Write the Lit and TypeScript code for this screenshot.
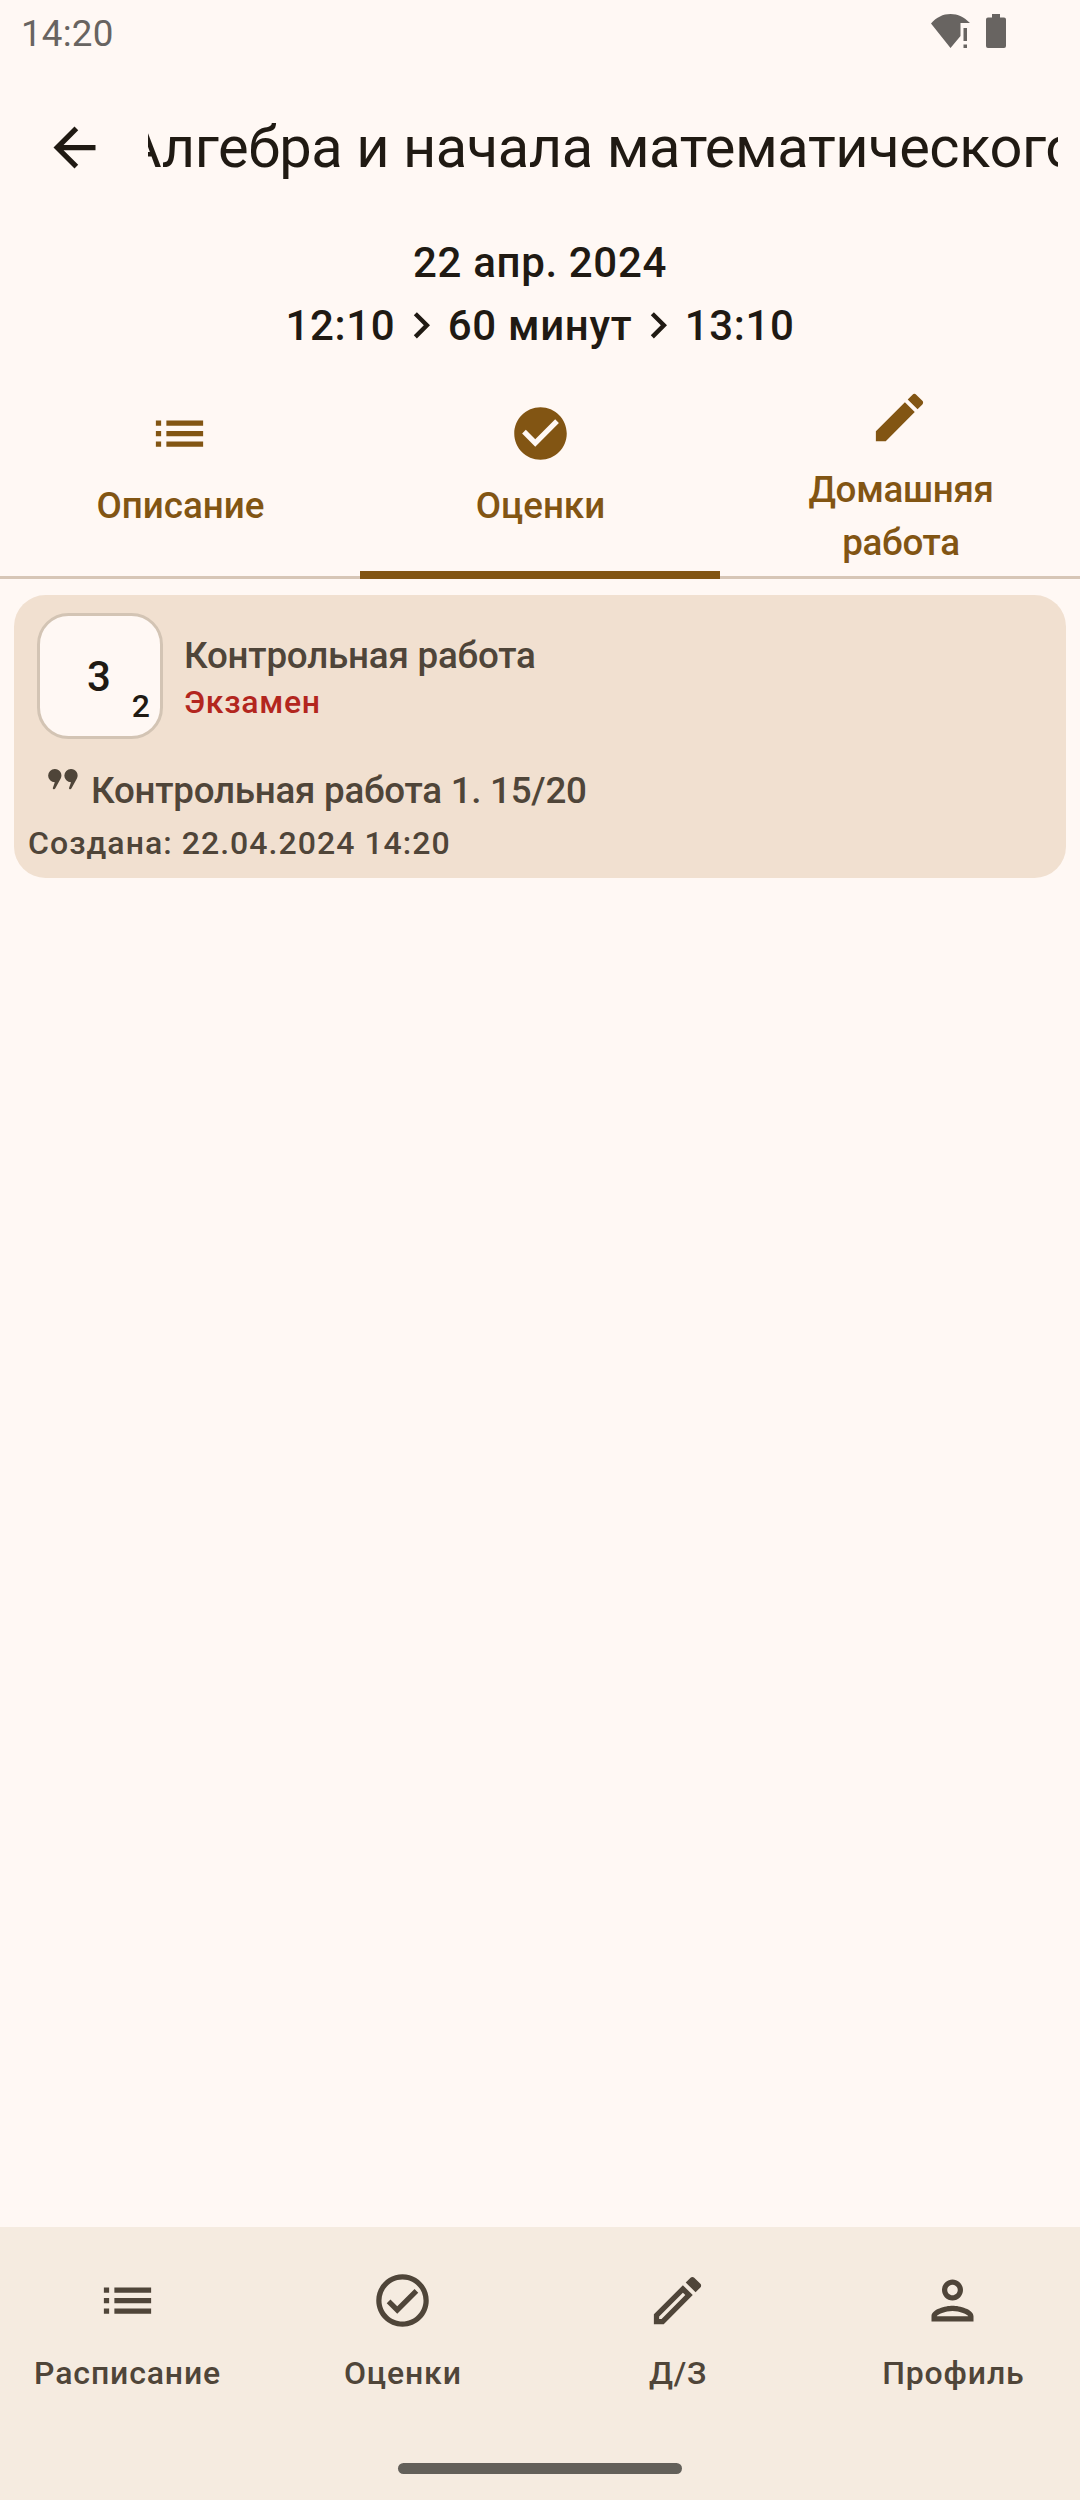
import { LitElement, html, css, svg } from "lit";
import { customElement } from "lit/decorators.js";

const PATHS = {
  back: "M20 11H7.83l5.59-5.59L12 4l-8 8 8 8 1.41-1.41L7.83 13H20v-2z",
  chevron: "M10 6 8.59 7.41 13.17 12l-4.58 4.59L10 18l6-6z",
  list: "M3 13h2v-2H3v2zm0 4h2v-2H3v2zm0-8h2V7H3v2zm4 4h14v-2H7v2zm0 4h14v-2H7v2zM7 7v2h14V7H7z",
  check: "M12 2C6.48 2 2 6.48 2 12s4.48 10 10 10 10-4.48 10-10S17.52 2 12 2zm-2 15-5-5 1.41-1.41L10 14.17l7.59-7.59L19 8l-9 9z",
  pencil: "M3 17.25V21h3.75L17.81 9.94l-3.75-3.75L3 17.25zM20.71 7.04c.39-.39.39-1.02 0-1.41l-2.34-2.34c-.39-.39-1.02-.39-1.41 0l-1.83 1.83 3.75 3.75 1.83-1.83z",
  checkOutline: "M16.59 7.58 10 14.17l-2.59-2.58L6 13l4 4 8-8zM12 2C6.48 2 2 6.48 2 12s4.48 10 10 10 10-4.48 10-10S17.52 2 12 2zm0 18c-4.42 0-8-3.58-8-8s3.58-8 8-8 8 3.58 8 8-3.58 8-8 8z",
  pencilOutline: "M14.06 9.02l.92.92L5.92 19H5v-.92l9.06-9.06M17.66 3c-.25 0-.51.1-.7.29l-1.83 1.83 3.75 3.75 1.83-1.83c.39-.39.39-1.02 0-1.41l-2.34-2.34c-.2-.2-.45-.29-.71-.29zm-3.6 3.19L3 17.25V21h3.75L17.81 9.94l-3.75-3.75z",
  person: "M12 6c1.1 0 2 .9 2 2s-.9 2-2 2-2-.9-2-2 .9-2 2-2m0 10c2.7 0 5.8 1.29 6 2H6c.23-.72 3.31-2 6-2m0-12C9.79 4 8 5.79 8 8s1.79 4 4 4 4-1.79 4-4-1.79-4-4-4zm0 10c-2.67 0-8 1.34-8 4v2h16v-2c0-2.66-5.33-4-8-4z",
};

const icon = (name: keyof typeof PATHS, cls = "icon") =>
  html`<svg class=${cls} viewBox="0 0 24 24" aria-hidden="true">${svg`<path d=${PATHS[name]}></path>`}</svg>`;

@customElement("app-root")
export class AppRoot extends LitElement {
  static styles = css`
    :host {
      display: flex;
      flex-direction: column;
      box-sizing: border-box;
      width: 1080px;
      height: 2500px;
      overflow: hidden;
      background: #fff8f4;
      color: #201a13;
      font-family: Roboto, "Noto Sans", sans-serif;
      font-weight: 500;
    }
    svg { display: block; fill: currentColor; flex: none; }
    .icon { width: 63px; height: 63px; }
    .status {
      display: flex;
      align-items: flex-start;
      justify-content: space-between;
      height: 63px;
      box-sizing: border-box;
      padding: 12px 74px 0 21px;
      color: #686461;
      font-size: 36.75px;
      line-height: 43px;
      letter-spacing: 0.2px;
      font-weight: 400;
    }
    .status-icons { display: flex; gap: 16px; padding-top: 2px; }
    .wifi { width: 39px; height: 35px; }
    .battery { width: 20px; height: 34px; }
    .bar {
      display: flex;
      align-items: center;
      height: 168px;
      padding: 0 22px 0 43px;
    }
    .title {
      flex: 1;
      margin-left: 42px;
      padding-top: 1.5px;
      overflow: hidden;
      white-space: nowrap;
      font-size: 57.75px;
      line-height: 73.5px;
      letter-spacing: -0.42px;
      font-weight: 400;
    }
    .title-text { display: block; margin-left: -24px; }
    .when {
      display: flex;
      flex-direction: column;
      align-items: center;
      font-size: 42px;
      line-height: 63px;
      letter-spacing: 0.66px;
    }
    .time { display: flex; align-items: center; }
    .chevron { width: 52.5px; height: 52.5px; }
    .tabs {
      display: grid;
      grid-template-columns: repeat(3, 1fr);
      height: 222px;
      color: #825513;
      font-size: 36.75px;
      line-height: 53px;
      letter-spacing: 0;
      text-align: center;
    }
    .tab {
      display: flex;
      flex-direction: column;
      align-items: center;
      gap: 14px;
      box-sizing: border-box;
      padding: 45px 0 0 1px;
      box-shadow: inset 0 -3px #d7c6b6;
    }
    .tab .icon { margin-left: -1.5px; }
    .tab.active { box-shadow: inset 0 -8px #825513; }
    .tab.active .icon { margin-left: -1px; }
    .tab.tall { padding: 29px 79px 0 81px; letter-spacing: -0.3px; }
    .tab.tall .icon { margin-left: -3px; }
    .content { flex: 1; padding: 16px 14px 0; }
    .card {
      box-sizing: border-box;
      height: 283px;
      padding: 18px 14px 0;
      border-radius: 31.5px;
      background: #f1e0d0;
      color: #4f4539;
    }
    .head { display: flex; align-items: center; gap: 21px; padding-left: 9px; }
    .mark {
      position: relative;
      display: flex;
      align-items: center;
      justify-content: center;
      box-sizing: border-box;
      width: 126px;
      height: 126px;
      border: 3px solid #d3c4b4;
      border-radius: 31.5px;
      background: #fff8f4;
      color: #201a13;
      font-size: 42px;
      line-height: 63px;
    }
    .grade { margin-right: 2px; }
    .weight {
      position: absolute;
      right: 10px;
      bottom: 9px;
      font-size: 32px;
      line-height: 42px;
    }
    .head-text { display: flex; flex-direction: column; padding-top: 2px; }
    .name { font-size: 36.75px; line-height: 52px; letter-spacing: -0.22px; }
    .kind {
      margin: -1px 0 1px;
      font-size: 32px;
      line-height: 42px;
      letter-spacing: 0.7px;
      color: #b3261e;
    }
    .comment {
      display: flex;
      margin-top: 25px;
      padding-left: 20px;
      font-size: 36.75px;
      line-height: 53px;
      letter-spacing: -0.26px;
    }
    .quote { width: 30px; height: 21px; margin: 5px 13px 0 0; }
    .created { margin-top: 5px; font-size: 32px; line-height: 42px; letter-spacing: 1.04px; }
    .nav {
      display: flex;
      flex-direction: column;
      align-items: center;
      justify-content: space-between;
      box-sizing: border-box;
      height: 273px;
      padding: 42px 0 26px;
      background: #f5ebe0;
      color: #4f4539;
    }
    .items {
      display: grid;
      grid-template-columns: repeat(4, 1fr);
      gap: 21px;
      width: 100%;
      font-size: 32px;
      line-height: 42px;
      letter-spacing: 0.86px;
    }
    .item { display: flex; flex-direction: column; align-items: center; gap: 20px; }
    .item span { padding-left: 1px; }
    .handle { width: 284px; height: 11px; border-radius: 5.5px; background: #63605a; }
  `;

  render() {
    return html`
      <header class="status">
        <span>14:20</span>
        <div class="status-icons">
          <svg class="wifi" viewBox="0 0 39 35" aria-hidden="true">
            <path d="M0 9.5C5.500 3.200 12 0 19.500 0S33 3 39 9H29.500V22L19.500 34Z"></path>
            <path d="M32.500 14h3.500v13h-3.500zM32.500 30.500h3.500v3.500h-3.500z"></path>
          </svg>
          <svg class="battery" viewBox="0 0 20 34" aria-hidden="true">
            <path d="M6 0h8v3.500h4a2 2 0 0 1 2 2V32a2 2 0 0 1-2 2H2a2 2 0 0 1-2-2V5.500a2 2 0 0 1 2-2h4z"></path>
          </svg>
        </div>
      </header>
      <div class="bar">
        ${icon("back")}
        <div class="title"><span class="title-text">Алгебра и начала математического анализа</span></div>
      </div>
      <div class="when">
        <span>22 апр. 2024</span>
        <div class="time">
          <span>12:10</span>${icon("chevron", "chevron")}<span>60 минут</span>${icon("chevron", "chevron")}<span>13:10</span>
        </div>
      </div>
      <nav class="tabs">
        <div class="tab">${icon("list")}<span>Описание</span></div>
        <div class="tab active">${icon("check")}<span>Оценки</span></div>
        <div class="tab tall">${icon("pencil")}<span>Домашняя работа</span></div>
      </nav>
      <main class="content">
        <section class="card">
          <div class="head">
            <div class="mark"><span class="grade">3</span><span class="weight">2</span></div>
            <div class="head-text">
              <span class="name">Контрольная работа</span>
              <span class="kind">Экзамен</span>
            </div>
          </div>
          <div class="comment">
            <svg class="quote" viewBox="0 0 30 21" aria-hidden="true">
              <path d="M6.700 0a6.600 6.600 0 0 1 6 9.600L7.200 19.500Q6.600 20.600 5.500 20.200T5 18.500L6.800 13.200A6.600 6.600 0 0 1 6.700 0zM22.900 0a6.600 6.600 0 0 1 6 9.600L23.400 19.500Q22.800 20.600 21.700 20.200T21.200 18.500L23 13.200A6.600 6.600 0 0 1 22.900 0z"></path>
            </svg>
            <span>Контрольная работа 1. 15/20</span>
          </div>
          <div class="created">Создана: 22.04.2024 14:20</div>
        </section>
      </main>
      <footer class="nav">
        <div class="items">
          <div class="item">${icon("list")}<span>Расписание</span></div>
          <div class="item">${icon("checkOutline")}<span>Оценки</span></div>
          <div class="item">${icon("pencilOutline")}<span>Д/З</span></div>
          <div class="item">${icon("person")}<span>Профиль</span></div>
        </div>
        <div class="handle"></div>
      </footer>
    `;
  }
}
